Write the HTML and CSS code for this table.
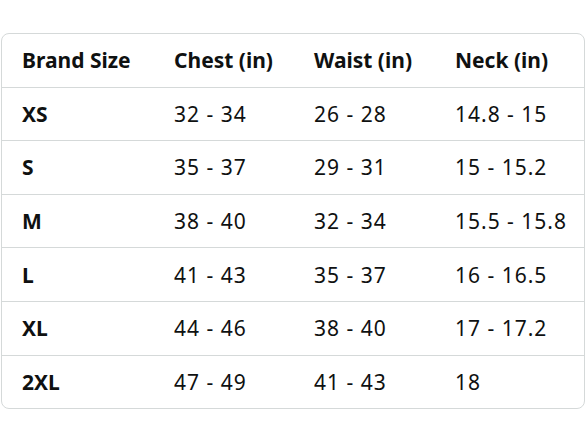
FILE: index.html
```html
<!DOCTYPE html>
<html>
<head>
<meta charset="utf-8">
<link rel="stylesheet" href="styles.css">
</head>
<body>
<div class="wrap">
<table class="size-table">
<colgroup>
<col class="c1"><col class="c2"><col class="c3"><col class="c4">
</colgroup>
<thead>
<tr><th>Brand Size</th><th>Chest (in)</th><th>Waist (in)</th><th>Neck (in)</th></tr>
</thead>
<tbody>
<tr><th>XS</th><td>32 - 34</td><td>26 - 28</td><td>14.8 - 15</td></tr>
<tr><th>S</th><td>35 - 37</td><td>29 - 31</td><td>15 - 15.2</td></tr>
<tr><th>M</th><td>38 - 40</td><td>32 - 34</td><td>15.5 - 15.8</td></tr>
<tr><th>L</th><td>41 - 43</td><td>35 - 37</td><td>16 - 16.5</td></tr>
<tr><th>XL</th><td>44 - 46</td><td>38 - 40</td><td>17 - 17.2</td></tr>
<tr><th>2XL</th><td>47 - 49</td><td>41 - 43</td><td>18</td></tr>
</tbody>
</table>
</div>
</body>
</html>
```

FILE: styles.css
```css
html, body {
  margin: 0;
  padding: 0;
  background: #ffffff;
}
body {
  font-family: "Noto Sans", "Open Sans", sans-serif;
  color: #0f1111;
}
.wrap {
  padding: 33px 3px 0 1px;
}
.size-table {
  width: 584px;
  border-collapse: separate;
  border-spacing: 0;
  border: 1px solid #d5d9d9;
  border-radius: 8px;
  table-layout: fixed;
}
.c1 { width: 152px; }
.c2 { width: 140px; }
.c3 { width: 141px; }
.c4 { width: 149px; }
.size-table th,
.size-table td {
  height: 52.6px;
  box-sizing: content-box;
  padding: 0 0 0 20px;
  text-align: left;
  font-size: 21px;
  line-height: 26px;
  white-space: nowrap;
  vertical-align: middle;
  border-bottom: 1px solid #d5d9d9;
}
.size-table th {
  font-weight: 700;
}
.size-table td {
  font-weight: 400;
  letter-spacing: 1px;
}
.size-table tbody tr:last-child th,
.size-table tbody tr:last-child td {
  border-bottom: none;
}
```
